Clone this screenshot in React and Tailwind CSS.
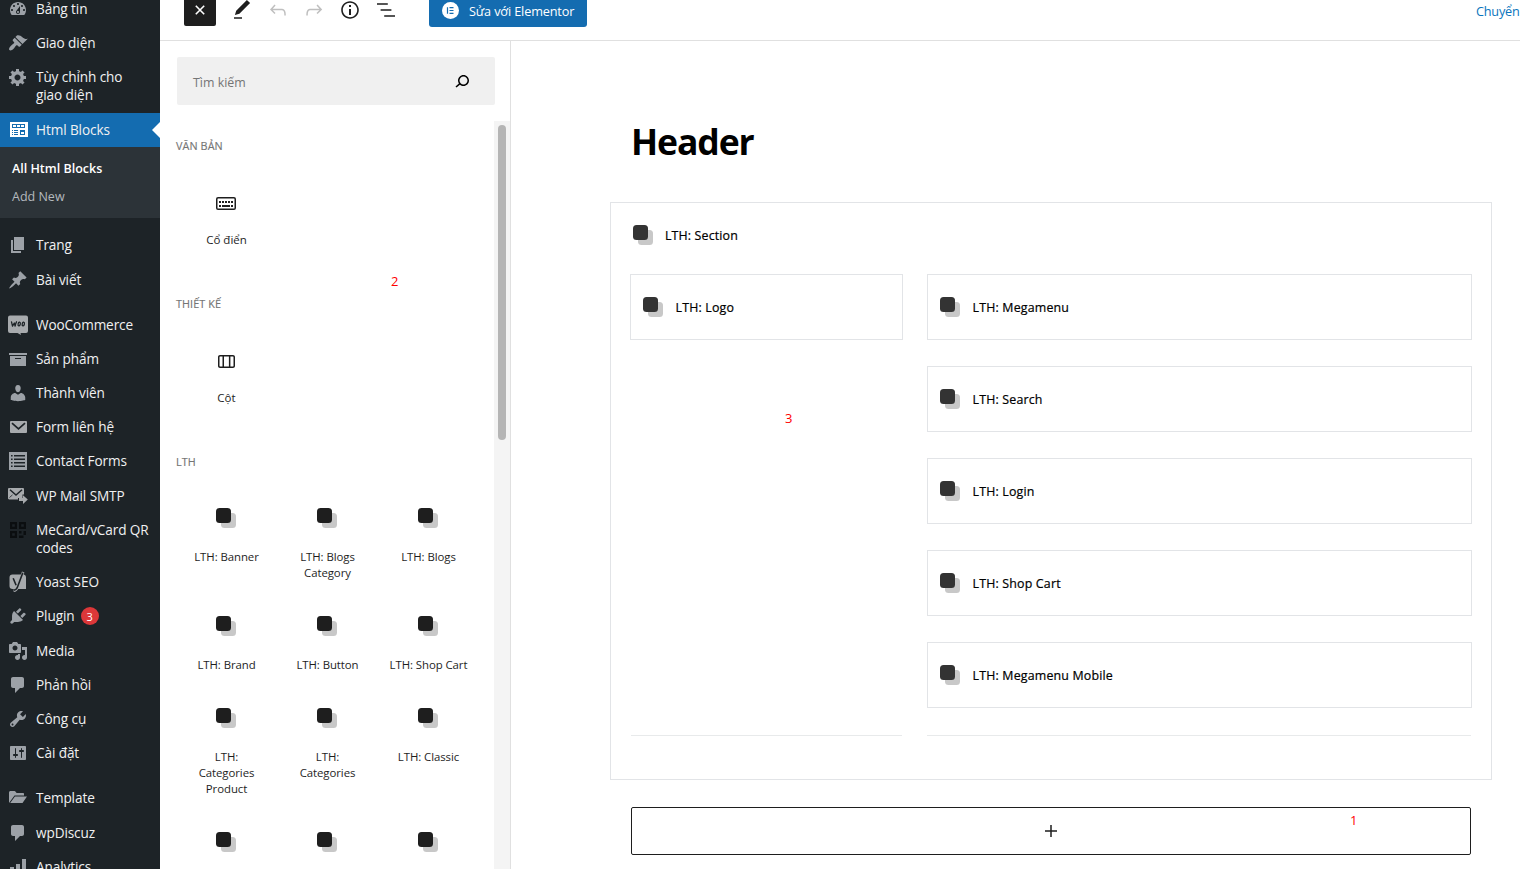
import React from "react";

const paths = {
  dashboard:
    "M3.76 16h12.48c1.1-1.37 1.76-3.11 1.76-5 0-4.42-3.58-8-8-8s-8 3.58-8 8c0 1.89.66 3.63 1.76 5zM10 4c.55 0 1 .45 1 1s-.45 1-1 1-1-.45-1-1 .45-1 1-1zM6 6c.55 0 1 .45 1 1s-.45 1-1 1-1-.45-1-1 .45-1 1-1zm8 0c.55 0 1 .45 1 1s-.45 1-1 1-1-.45-1-1 .45-1 1-1zm-5.37 5.55L12 7v6c0 1.1-.9 2-2 2s-2-.9-2-2c0-.57.24-1.08.63-1.45zM4 10c.55 0 1 .45 1 1s-.45 1-1 1-1-.45-1-1 .45-1 1-1zm12 0c.55 0 1 .45 1 1s-.45 1-1 1-1-.45-1-1 .45-1 1-1zm-5 3c0-.55-.45-1-1-1s-1 .45-1 1 .45 1 1 1 1-.45 1-1z",
  appearance:
    "M14.48 11.06L7.41 3.99l1.5-1.5c.5-.56 2.3-.47 3.51.32 1.21.8 1.43 1.28 2.91 2.1 1.18.64 2.45 1.26 4.45.85zm-.71.71L6.7 4.7 4.93 6.47c-.39.39-.39 1.02 0 1.41l1.06 1.06c.39.39.39 1.03 0 1.42-.6.6-1.43 1.11-2.21 1.69-.35.26-.7.53-1.01.84C1.43 14.23.4 16.08 1.4 17.07c.99 1 2.84-.03 4.18-1.36.31-.31.58-.66.85-1.02.57-.78 1.08-1.61 1.69-2.21.39-.39 1.02-.39 1.41 0l1.06 1.06c.39.39 1.02.39 1.41 0z",
  generic:
    "M18 12h-2.18c-.17.7-.44 1.35-.81 1.93l1.54 1.54-2.1 2.1-1.54-1.54c-.58.36-1.23.63-1.91.79V19H8v-2.18c-.68-.16-1.33-.43-1.91-.79l-1.54 1.54-2.12-2.12 1.54-1.54c-.36-.58-.63-1.23-.79-1.91H1V9.03h2.17c.16-.7.44-1.35.8-1.94L2.43 5.55l2.1-2.1 1.54 1.54c.58-.37 1.24-.64 1.93-.81V2h3v2.18c.68.16 1.33.43 1.91.79l1.54-1.54 2.12 2.12-1.54 1.54c.36.59.64 1.24.8 1.94H18V12zm-8.5 1.5c1.66 0 3-1.34 3-3s-1.34-3-3-3-3 1.34-3 3 1.34 3 3 3z",
  page: "M6 15V2h10v13H6zm-1 1h8v2H3V5h2v11z",
  post: "M10.44 3.02l1.82-1.82 6.36 6.35-1.83 1.82c-1.05-.68-2.48-.57-3.41.36l-.75.75c-.92.93-1.04 2.35-.35 3.41l-1.83 1.82-2.41-2.41-2.8 2.79c-.42.42-3.38 2.71-3.8 2.29s1.86-3.39 2.28-3.81l2.79-2.79L4.1 9.36l1.83-1.82c1.05.69 2.48.57 3.4-.36l.75-.75c.93-.92 1.05-2.35.36-3.41z",
  archive: "M19 4v2H1V4h18zM2 7h16v10H2V7zm11 3V9H7v1h6z",
  users:
    "M10 9.25c-2.27 0-2.73-3.44-2.73-3.44C7 4.02 7.82 2 9.97 2c2.16 0 2.98 2.02 2.71 3.81 0 0-.41 3.44-2.68 3.44zm0 2.57L12.72 10c2.39 0 4.52 2.33 4.52 4.53v2.49s-3.65 1.13-7.24 1.13c-3.65 0-7.24-1.13-7.24-1.13v-2.49c0-2.25 1.94-4.48 4.47-4.48z",
  list: "M1 1h18v18H1zM3 4v1.600h1.600V4zm3 0v1.600h11V4zM3 7.500v1.600h1.600V7.500zm3 0v1.600h11V7.500zM3 11v1.600h1.600V11zm3 0v1.600h11V11zM3 14.500v1.600h1.600v-1.600zm3 0v1.600h11v-1.600z",
  qr: "M2 2h7v7H2zm2.200 2.200v2.600h2.600V4.200zM11 2h7v7h-7zm2.200 2.200v2.600h2.600V4.200zM2 11h7v7H2zm2.200 2.200v2.600h2.600v-2.600zM11 11h2.500v2.500H11zM15.500 11H18v4h-2.500v3H11v-2.500h4.500z",
  plugins:
    "M13.11 4.36L9.87 7.6 8 5.73l3.24-3.24c.35-.34 1.05-.2 1.56.32.52.51.66 1.21.31 1.55zm-8 1.77l.91-1.12 9.01 9.01-1.19.84c-.71.71-2.63 1.16-3.82 1.16H6.14L4.9 17.26c-.59.59-1.54.59-2.12 0-.59-.58-.59-1.53 0-2.12l1.24-1.24v-3.88c0-1.13.4-3.19 1.09-3.89zm7.26 3.97l3.24-3.24c.34-.35 1.04-.21 1.55.31.52.51.66 1.21.31 1.55l-3.24 3.25z",
  media:
    "M13 11V4c0-.55-.45-1-1-1h-1.67L9 1H5L3.67 3H2c-.55 0-1 .45-1 1v7c0 .55.45 1 1 1h10c.55 0 1-.45 1-1zM7 4.5c1.38 0 2.5 1.12 2.5 2.5S8.38 9.5 7 9.5 4.5 8.38 4.5 7 5.62 4.5 7 4.5zM14 6h5v10.5c0 1.38-1.12 2.5-2.5 2.5S14 17.88 14 16.5s1.12-2.5 2.5-2.5c.17 0 .34.02.5.05V9h-3V6zm-4 8.05V13h2v3.5c0 1.38-1.12 2.5-2.5 2.5S7 17.88 7 16.5 8.12 14 9.5 14c.17 0 .34.02.5.05z",
  comments:
    "M5 2h9c1.1 0 2 .9 2 2v7c0 1.1-.9 2-2 2h-2l-5 5v-5H5c-1.1 0-2-.9-2-2V4c0-1.1.9-2 2-2z",
  tools:
    "M16.68 9.77c-1.34 1.34-3.3 1.67-4.95.99l-5.41 6.52c-.99.99-2.59.99-3.58 0s-.99-2.59 0-3.57l6.52-5.42c-.68-1.65-.35-3.61.99-4.95 1.28-1.28 3.12-1.62 4.72-1.06l-2.89 2.89 2.82 2.82 2.86-2.87c.53 1.58.18 3.39-1.08 4.65zM3.81 16.21c.4.39 1.04.39 1.43 0 .4-.4.4-1.04 0-1.43-.39-.4-1.03-.4-1.43 0-.39.39-.39 1.03 0 1.43z",
  settings:
    "M18 16V4c0-.55-.45-1-1-1H3c-.55 0-1 .45-1 1v12c0 .55.45 1 1 1h14c.55 0 1-.45 1-1zM8 11h1c.55 0 1 .45 1 1s-.45 1-1 1H8v1.5c0 .28-.22.5-.5.5s-.5-.22-.5-.5V13H6c-.55 0-1-.45-1-1s.45-1 1-1h1V5.5c0-.28.22-.5.5-.5s.5.22.5.5V11zm5-2h-1c-.55 0-1-.45-1-1s.45-1 1-1h1V5.5c0-.28.22-.5.5-.5s.5.22.5.5V7h1c.55 0 1 .45 1 1s-.45 1-1 1h-1v5.5c0 .28-.22.5-.5.5s-.5-.22-.5-.5V9z",
  folder:
    "M1 15V4.500C1 3.700 1.700 3 2.500 3h4C7.500 3 8 5 9 5h6c.600 0 1 .400 1 1v1.500H6.500L1 15zM6.900 8.500H19L14.500 15H2.200z",
  chart: "M18 18V2h-4v16h4zm-6 0V7H8v11h4zm-6 0v-8H2v8h4z",
};

function Icon({ name }) {
  if (name === "blocks")
    return (
      <svg viewBox="0 0 20 20" className="size-5 overflow-visible" shapeRendering="crispEdges">
        <path fill="#fff" d="M2 2h18v15H2z" />
        <path
          fill="#146cb0"
          d="M4 4h13v1H4zM4 7h13v1H4zM4 5h1v2H4zM8 5h1v2H8zM12 5h1v2h-1zM16 5h1v2h-1zM4 10h1v1H4zM6 10h4v1H6zM4 12h1v1H4zM6 12h4v1H6zM4 14h1v1H4zM6 14h4v1H6zM12 10h5v2h-5zM12 14h5v1h-5zM12 12h1v2h-1zM16 12h1v2h-1z"
        />
      </svg>
    );
  if (name === "woo")
    return (
      <svg viewBox="0 0 20 20" className="size-5 overflow-visible">
        <path fill="#a7aaad" d="M2 .5h16a2 2 0 012 2v13.500a2 2 0 01-2 2h-5.500l.500 2-3.500-2H2a2 2 0 01-2-2V2.500a2 2 0 012-2z" />
        <g fill="none" stroke="#1d2327" strokeWidth="1.300" strokeLinecap="round" strokeLinejoin="round">
          <path d="M3.500 6.800l1 4.400 1.800-3.200.8 3.200c.3-1.800.7-3.200 1.400-4.400" />
          <ellipse cx="11.200" cy="9" rx="1.100" ry="1.900" transform="rotate(12 11.200 9)" />
          <ellipse cx="15.300" cy="9" rx="1.100" ry="1.900" transform="rotate(12 15.300 9)" />
        </g>
      </svg>
    );
  if (name === "email")
    return (
      <svg viewBox="0 0 20 20" className="size-5">
        <rect x="2" y="4" width="17" height="12" rx="1" fill="#a7aaad" />
        <path d="M4 6.200l6.500 5.600L17 6.200" fill="none" stroke="#1d2327" strokeWidth="1.700" />
      </svg>
    );
  if (name === "smtp")
    return (
      <svg viewBox="0 0 20 20" className="size-5 overflow-visible">
        <path fill="#a7aaad" d="M1.200 2h13.600c.700 0 1.200.500 1.200 1.200v5.300h-1.500V12H10v1.500H1.200C.5 13.500 0 13 0 12.300V3.200C0 2.500.500 2 1.200 2z" />
        <path d="M2 3.800l6 5.200 6-5.200" fill="none" stroke="#1d2327" strokeWidth="1.500" />
        <path d="M1.500 11.500l3-2.600" fill="none" stroke="#1d2327" strokeWidth=".8" />
        <path fill="#a7aaad" d="M11 12h4V9.300l4.800 4.300-4.800 4.300v-2.800h-4z" />
      </svg>
    );
  if (name === "yoast")
    return (
      <svg viewBox="0 0 20 20" className="size-5 overflow-visible">
        <path d="M15.200 0L9.600 15.300c-.8 2.200-1.800 3.300-4 3.500" fill="none" stroke="#a7aaad" strokeWidth="2.600" />
        <path fill="#a7aaad" d="M4.500 2.500h10.500A3 3 0 0118 5.500V17H4.500a3 3 0 01-3-3V5.500a3 3 0 013-3z" />
        <path d="M5.200 6.300l2.900 7M14.800 .8L9.500 15c-.8 2.200-1.800 3-3.600 3.200" fill="none" stroke="#1d2327" strokeWidth="1.600" />
      </svg>
    );
  const color = name === "qr" ? "#0b0e10" : "#9ca1a7";
  return (
    <svg viewBox="0 0 20 20" className="size-5 overflow-visible">
      <path fill={color} fillRule="evenodd" d={paths[name]} />
    </svg>
  );
}

function MenuItem({ icon, label, active, badge }) {
  return (
    <div className={active ? "relative flex bg-[#146cb0]" : "relative flex"}>
      <div className="flex w-9 shrink-0 justify-center pt-[7px]">
        <Icon name={icon} />
      </div>
      <div className="flex-1 whitespace-pre-line py-2 text-[13.6px] leading-[18.2px] tracking-[-0.1px] text-[#f0f0f1]">
        {label}
        {badge && (
          <span className="ml-1.5 inline-flex size-[18px] items-center justify-center rounded-full bg-[#dc3739] align-top text-[11px] leading-none text-white">
            {badge}
          </span>
        )}
      </div>
      {active && (
        <svg viewBox="0 0 8 16" className="absolute right-0 top-[9px] h-4 w-2">
          <path d="M8 0v16L0 8z" fill="#fff" />
        </svg>
      )}
    </div>
  );
}

const groups = [
  {
    gap: "pt-[10.4px]",
    items: [
      ["page", "Trang"],
      ["post", "Bài viết"],
    ],
  },
  {
    gap: "pt-[10.7px]",
    items: [
      ["woo", "WooCommerce"],
      ["archive", "Sản phẩm"],
      ["users", "Thành viên"],
      ["email", "Form liên hệ"],
      ["list", "Contact Forms"],
      ["smtp", "WP Mail SMTP"],
      ["qr", "MeCard/vCard QR\ncodes"],
      ["yoast", "Yoast SEO"],
      ["plugins", "Plugin", "3"],
      ["media", "Media"],
      ["comments", "Phản hồi"],
      ["tools", "Công cụ"],
      ["settings", "Cài đặt"],
    ],
  },
  {
    gap: "pt-[11.1px]",
    items: [
      ["folder", "Template"],
      ["comments", "wpDiscuz"],
      ["chart", "Analytics"],
    ],
  },
];

function Sidebar() {
  return (
    <aside className="h-[869px] w-40 shrink-0 overflow-hidden bg-[#1d2327]">
      <div className="-mt-[8.2px] flex flex-col">
        <MenuItem icon="dashboard" label="Bảng tin" />
        <MenuItem icon="appearance" label="Giao diện" />
        <MenuItem icon="generic" label={"Tùy chỉnh cho\ngiao diện"} />
        <MenuItem icon="blocks" label="Html Blocks" active />
        <div className="flex h-[71.2px] flex-col bg-[#2c3338] px-3 pt-2 text-[12.5px]">
          <div className="h-7 leading-7 font-semibold text-white">All Html Blocks</div>
          <div className="h-7 leading-7 text-[#b4b9be]">Add New</div>
        </div>
        {groups.map((g) => (
          <div key={g.gap} className={g.gap}>
            {g.items.map(([icon, label, badge]) => (
              <MenuItem key={label} icon={icon} label={label} badge={badge} />
            ))}
          </div>
        ))}
      </div>
    </aside>
  );
}

function ToolIcon({ d, className }) {
  return (
    <svg viewBox="0 0 24 24" fill="currentColor" className={className}>
      <path d={d} />
    </svg>
  );
}

function Toolbar() {
  return (
    <header className="h-[41px] overflow-hidden border-b border-[#e0e0e0]">
      <div className="-mt-5 flex h-[60px] items-center pl-6">
        <div className="flex size-8 items-center justify-center rounded-[2px] bg-[#1e1e1e]">
          <svg viewBox="0 0 10 10" className="size-[10px]">
            <path d="M.8 .8l8.400 8.400M9.200 .8L.8 9.200" stroke="#fff" strokeWidth="1.600" />
          </svg>
        </div>
        <ToolIcon className="ml-[14px] size-6 text-[#1e1e1e]" d="M20.1 5.1L16.9 2 6.2 12.7l-1.3 4.4 4.5-1.3L20.1 5.1zM4 20.8h8v-1.5H4v1.5z" />
        <ToolIcon className="ml-3 size-6 text-[#bfbfbf]" d="M18.3 11.7c-.6-.6-1.4-.9-2.3-.9H6.7l2.9-3.3-1.1-1-4.5 5L8.5 16l1-1-2.7-2.7H16c.5 0 .9.2 1.3.5 1 1 1 3.4 1 4.5v.3h1.5v-.2c0-1.5 0-4.3-1.5-5.7z" />
        <ToolIcon className="ml-3 size-6 text-[#bfbfbf]" d="M15.6 6.5l-1.1 1 2.9 3.3H8c-.9 0-1.7.3-2.3.9-1.4 1.5-1.4 4.2-1.4 5.6v.2h1.5v-.3c0-1.1 0-3.5 1-4.5.3-.3.7-.5 1.3-.5h9.2L14.5 15l1.1 1.1 4.6-4.6-4.6-5z" />
        <ToolIcon className="ml-3 size-6 text-[#1e1e1e]" d="M12 3.2c-4.8 0-8.8 3.9-8.8 8.8 0 4.8 3.9 8.8 8.8 8.8 4.8 0 8.8-3.9 8.8-8.8 0-4.8-4-8.8-8.8-8.8zm0 16c-4 0-7.2-3.3-7.2-7.2C4.8 8 8 4.8 12 4.8s7.2 3.3 7.2 7.2c0 4-3.2 7.2-7.2 7.2zM11 17h2v-6h-2v6zm0-8h2V7h-2v2z" />
        <ToolIcon className="ml-3 size-6 text-[#1e1e1e]" d="M13.8 5.2H3v1.5h10.8V5.2zm-3.6 12v1.5H21v-1.5H10.2zm7.2-6H6.6v1.5h10.8v-1.5z" />
        <div className="ml-[31px] flex h-[34px] w-[158px] items-center rounded-[3px] bg-[#146cb0] pl-[13px] text-white">
          <svg viewBox="0 0 17 17" className="size-[17px]">
            <circle cx="8.500" cy="8.500" r="8.500" fill="#fff" />
            <path d="M5.500 5.200v6.600M7.500 5.700h4M7.500 8.500h4M7.500 11.300h4" stroke="#146cb0" strokeWidth="1.200" />
          </svg>
          <span className="ml-[10px] pt-px text-[12.7px] leading-4 tracking-[-0.14px] whitespace-nowrap">Sửa với Elementor</span>
        </div>
        <span className="ml-auto w-11 pt-0.5 text-[12.7px] leading-4 tracking-[-0.2px] whitespace-nowrap text-[#0a75bd]">Chuyển</span>
      </div>
    </header>
  );
}

function BlockIcon({ dark }) {
  return (
    <svg viewBox="0 0 20 20" className="size-5 shrink-0">
      <rect x="5" y="5" width="15" height="15" rx="3.500" fill="#c8c8c8" />
      <rect width="15" height="15" rx="3.500" fill={dark ? "#1e1e1e" : "#333333"} />
    </svg>
  );
}

function Tile({ label, children }) {
  return (
    <div className="flex flex-col items-center">
      <div className="-ml-px flex h-6 items-center">{children || <BlockIcon dark />}</div>
      <div
        className={
          children
            ? "pt-4 text-center whitespace-pre-line text-[11.5px] leading-4 text-[#1e1e1e]"
            : "pt-[19px] text-center whitespace-pre-line text-[11.4px] leading-4 tracking-[-0.07px] text-[#1e1e1e]"
        }
      >
        {label}
      </div>
    </div>
  );
}

function GroupTitle({ children }) {
  return <h2 className="pl-4 text-[10.8px] leading-4 font-medium tracking-[0.1px] text-[#757575] [-webkit-text-stroke:0.15px_#757575]">{children}</h2>;
}

function TileRow({ labels, className }) {
  return (
    <div className={className}>
      {labels.map((l, i) => (
        <Tile key={i} label={l} />
      ))}
    </div>
  );
}

function Inserter() {
  return (
    <section className="relative flex w-[351px] shrink-0 flex-col border-r border-[#e0e0e0]">
      <div className="mt-4 ml-[17px] flex h-12 w-[318px] shrink-0 items-center justify-between rounded-[2px] bg-[#f0f0f0] pr-[21px] pl-4">
        <span className="pt-1 text-[12.4px] leading-4 text-[#757575]">Tìm kiếm</span>
        <ToolIcon className="size-6 text-black" d="M13.5 6C10.5 6 8 8.5 8 11.5c0 1.1.3 2.1.9 3l-3.4 3 1 1.1 3.4-2.9c1 .9 2.2 1.4 3.6 1.4 3 0 5.5-2.5 5.5-5.5C19 8.5 16.5 6 13.5 6zm0 9.5c-2.2 0-4-1.8-4-4s1.800-4 4-4 4 1.800 4 4-1.800 4-4 4z" />
      </div>
      <div className="mt-4 flex h-[748px] overflow-hidden">
        <div className="w-[334px] shrink-0 pt-[17px]">
          <GroupTitle>VĂN BẢN</GroupTitle>
          <div className="grid grid-cols-[101px_101px_101px] pt-[38px] pl-4">
            <Tile label="Cổ điển">
              <svg viewBox="0 0 20 13" className="-mt-px h-[13px] w-5">
                <rect x=".75" y=".75" width="18.500" height="11.500" rx="1.300" fill="none" stroke="#1e1e1e" strokeWidth="1.500" />
                <path d="M3 5h2M6 5h2M9 5h2M12 5h2M15 5h2M3 9h2M6 9h8M15 9h2" stroke="#1e1e1e" strokeWidth="2" />
              </svg>
            </Tile>
          </div>
          <div className="h-12" />
          <GroupTitle>THIẾT KẾ</GroupTitle>
          <div className="grid grid-cols-[101px_101px_101px] pt-[38px] pl-4">
            <Tile label="Cột">
              <ToolIcon className="-mt-[3px] size-6 text-[#1e1e1e]" d="M19 6H6c-1.100 0-2 .9-2 2v9c0 1.100.9 2 2 2h13c1.100 0 2-.9 2-2V8c0-1.100-.9-2-2-2zm-4.100 1.500v10H10v-10h4.900zM5.500 17V8c0-.3.2-.5.5-.5h2.500v10H6c-.3 0-.5-.2-.5-.5zm14 0c0 .3-.2.5-.5.5h-2.600v-10H19c.3 0 .5.2.5.5v9z" />
            </Tile>
          </div>
          <div className="h-12" />
          <GroupTitle>LTH</GroupTitle>
          <TileRow className="grid h-[144px] grid-cols-[101px_101px_101px] pt-9 pl-4" labels={["LTH: Banner", "LTH: Blogs\nCategory", "LTH: Blogs"]} />
          <TileRow className="grid h-[92px] grid-cols-[101px_101px_101px] pl-4" labels={["LTH: Brand", "LTH: Button", "LTH: Shop Cart"]} />
          <TileRow className="grid h-[124px] grid-cols-[101px_101px_101px] pl-4" labels={["LTH:\nCategories\nProduct", "LTH:\nCategories", "LTH: Classic"]} />
          <TileRow className="grid grid-cols-[101px_101px_101px] pl-4" labels={["", "", ""]} />
        </div>
        <div className="w-4 bg-[#f4f4f4] pt-1 pl-1">
          <div className="h-[315px] w-2 rounded-full bg-[#b5b5b5]" />
        </div>
      </div>
      <span className="absolute top-[230px] left-[231px] text-[13px] leading-5 text-[#f00]">2</span>
    </section>
  );
}

function BlockCard({ label }) {
  return (
    <div className="flex h-[66px] items-center border border-[#e2e4e7] pl-3">
      <BlockIcon />
      <span className="ml-[12.5px] pt-0.5 text-[12.4px] leading-4 font-medium tracking-[0.18px] text-black [-webkit-text-stroke:0.2px_#000]">{label}</span>
    </div>
  );
}

function Canvas() {
  return (
    <main className="relative flex-1 pl-[99px]">
      <h1 className="mt-[75px] pl-[21px] text-[35.5px] leading-[50px] font-bold tracking-[-1.1px] text-black">Header</h1>
      <div className="mt-9 flex h-[578px] w-[882px] flex-col border border-[#e2e4e7] px-[19px]">
        <div className="mt-[22px] flex h-5 items-center pl-[3px]">
          <BlockIcon />
          <span className="ml-3 pt-px text-[12.4px] leading-4 font-medium tracking-[0.14px] text-black [-webkit-text-stroke:0.2px_#000]">LTH: Section</span>
        </div>
        <div className="mt-[29px] flex gap-6">
          <div className="flex h-[462px] w-[273px] flex-col justify-between">
            <BlockCard label="LTH: Logo" />
            <div className="mx-px h-px bg-[#e8eaeb]" />
          </div>
          <div className="flex h-[462px] w-[545px] flex-col gap-[26px]">
            <BlockCard label="LTH: Megamenu" />
            <BlockCard label="LTH: Search" />
            <BlockCard label="LTH: Login" />
            <BlockCard label="LTH: Shop Cart" />
            <BlockCard label="LTH: Megamenu Mobile" />
            <div className="mt-px mr-px h-px bg-[#e8eaeb]" />
          </div>
        </div>
      </div>
      <div className="mt-[27px] ml-[21px] flex h-12 w-[840px] items-center justify-center rounded-[2px] border border-[#1e1e1e]">
        <svg viewBox="0 0 12 12" className="size-3">
          <path d="M6 0v12M0 6h12" stroke="#1e1e1e" strokeWidth="1.500" />
        </svg>
      </div>
      <span className="absolute top-[367px] left-[274px] text-[13px] leading-5 text-[#f00]">3</span>
      <span className="absolute top-[769px] left-[839px] text-[13px] leading-5 text-[#f00]">1</span>
    </main>
  );
}

export default function App() {
  return (
    <div className="flex h-[869px] w-[1520px] overflow-hidden bg-white font-['Open_Sans','Noto_Sans',sans-serif]">
      <Sidebar />
      <div className="flex min-w-0 flex-1 flex-col">
        <Toolbar />
        <div className="flex flex-1">
          <Inserter />
          <Canvas />
        </div>
      </div>
    </div>
  );
}
